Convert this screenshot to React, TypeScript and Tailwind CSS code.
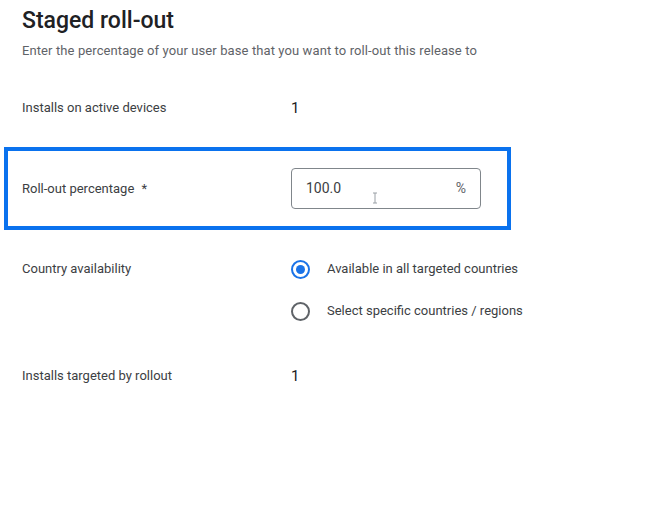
import React, { useState } from "react";

const Radio: React.FC<{ checked: boolean; label: string; onSelect: () => void }> = ({ checked, label, onSelect }) => (
  <div onClick={onSelect} className="flex items-center h-[20px] cursor-pointer">
    <span
      className={`w-[19px] h-[19px] rounded-full border-2 flex items-center justify-center ${
        checked ? "border-[#1a73e8]" : "border-[#5f6368]"
      }`}
    >
      {checked && <span className="w-[9px] h-[9px] rounded-full bg-[#1a73e8]" />}
    </span>
    <span className="ml-[17px] text-[13px] text-[#3c4043]">{label}</span>
  </div>
);

export default function App() {
  const [scope, setScope] = useState("all");

  return (
    <div className="min-h-screen bg-white pt-[6px] pl-[22px] font-['Roboto',sans-serif]">
      <h1 className="text-[23px] leading-[30px] font-medium text-[#202124]">Staged roll-out</h1>
      <p className="mt-[6px] text-[13px] leading-[18px] tracking-[0.1px] text-[#5f6368]">
        Enter the percentage of your user base that you want to roll-out this release to
      </p>

      {/* Installs on active devices */}
      <div className="mt-[38px] flex items-center h-[20px]">
        <span className="w-[269px] text-[13px] text-[#3c4043]">Installs on active devices</span>
        <span className="text-[15px] text-[#202124]">1</span>
      </div>

      {/* Highlighted roll-out percentage row */}
      <div className="mt-[29px] -ml-[18px] w-[507px] h-[83px] border-4 border-[#0a72ee] pl-[14px] flex items-center">
        <span className="w-[269px] text-[13px] text-[#3c4043]">
          Roll-out percentage <span className="ml-[4px]">*</span>
        </span>
        <div className="relative w-[190px] h-[41px] border border-[#80868b] rounded-[4px] px-[14px] flex items-center justify-between">
          <span className="text-[14px] text-[#3c4043]">100.0</span>
          <span className="text-[14px] text-[#5f6368]">%</span>
          {/* text cursor */}
          <svg className="absolute left-[80px] top-[23px]" width="6" height="12" viewBox="0 0 6 12">
            <path d="M1 1h4M3 1v10M1 11h4" stroke="#9aa0a6" strokeWidth="1" fill="none" />
          </svg>
        </div>
      </div>

      {/* Country availability */}
      <div className="mt-[29px] flex items-start">
        <span className="w-[269px] leading-[20px] text-[13px] text-[#3c4043]">Country availability</span>
        <div className="flex flex-col gap-[22px]">
          <Radio checked={scope === "all"} label="Available in all targeted countries" onSelect={() => setScope("all")} />
          <Radio checked={scope === "specific"} label="Select specific countries / regions" onSelect={() => setScope("specific")} />
        </div>
      </div>

      {/* Installs targeted by rollout */}
      <div className="mt-[45px] flex items-center h-[20px]">
        <span className="w-[269px] text-[13px] text-[#3c4043]">Installs targeted by rollout</span>
        <span className="text-[15px] text-[#202124]">1</span>
      </div>
    </div>
  );
}
